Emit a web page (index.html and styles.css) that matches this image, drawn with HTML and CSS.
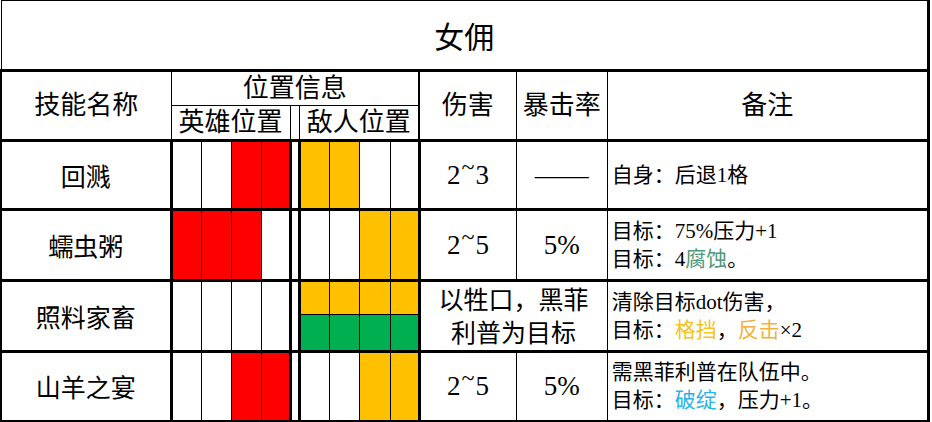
FILE: index.html
```html
<!DOCTYPE html>
<html lang="zh-CN">
<head>
<meta charset="utf-8">
<title>女佣</title>
<link rel="stylesheet" href="styles.css">
</head>
<body>
<table class="sheet">
  <colgroup>
    <col class="c-name">
    <col class="c-pos"><col class="c-pos"><col class="c-pos"><col class="c-pos4">
    <col class="c-gap">
    <col class="c-pos"><col class="c-pos"><col class="c-pos9"><col class="c-pos4">
    <col class="c-dmg">
    <col class="c-crit">
    <col class="c-note">
  </colgroup>
  <tr class="r-title">
    <td class="title" colspan="13">女佣</td>
  </tr>
  <tr class="r-h1">
    <td class="hd h-name" rowspan="2">技能名称</td>
    <td class="hd h-pos" colspan="9">位置信息</td>
    <td class="hd" rowspan="2">伤害</td>
    <td class="hd" rowspan="2">暴击率</td>
    <td class="hd h-note" rowspan="2">备注</td>
  </tr>
  <tr class="r-h2">
    <td class="hd sub" colspan="4">英雄位置</td>
    <td class="gap-h"></td>
    <td class="hd sub h-pos" colspan="4">敌人位置</td>
  </tr>
  <tr class="data r1">
    <td class="name">回溅</td>
    <td></td><td></td><td class="red"></td><td class="red end"></td>
    <td class="gap"></td>
    <td class="yel"></td><td class="yel"></td><td></td><td class="end"></td>
    <td class="num">2<span class="tilde">~</span>3</td>
    <td class="num dash">——</td>
    <td class="note">自身：后退1格</td>
  </tr>
  <tr class="data r2">
    <td class="name">蠕虫粥</td>
    <td class="red"></td><td class="red"></td><td class="red"></td><td class="end"></td>
    <td class="gap"></td>
    <td></td><td></td><td class="yel"></td><td class="yel end"></td>
    <td class="num">2<span class="tilde">~</span>5</td>
    <td class="num">5%</td>
    <td class="note">目标：75%压力+1<br>目标：4<span class="t-green">腐蚀</span>。</td>
  </tr>
  <tr class="data r3a">
    <td class="name" rowspan="2">照料家畜</td>
    <td rowspan="2"></td><td rowspan="2"></td><td rowspan="2"></td><td class="end" rowspan="2"></td>
    <td class="gap" rowspan="2"></td>
    <td class="yel upper"></td><td class="yel upper"></td><td class="yel upper"></td><td class="yel upper end"></td>
    <td class="target" colspan="2" rowspan="2">以牲口，黑菲<br>利普为目标</td>
    <td class="note" rowspan="2">清除目标dot伤害，<br>目标：<span class="t-gold">格挡</span>，<span class="t-orange">反击</span>×2</td>
  </tr>
  <tr class="data r3b">
    <td class="grn lower"></td><td class="grn lower"></td><td class="grn lower"></td><td class="grn lower end"></td>
  </tr>
  <tr class="data r4 last">
    <td class="name">山羊之宴</td>
    <td></td><td></td><td class="red"></td><td class="red end"></td>
    <td class="gap"></td>
    <td></td><td></td><td class="yel"></td><td class="yel end"></td>
    <td class="num">2<span class="tilde">~</span>5</td>
    <td class="num">5%</td>
    <td class="note">需黑菲利普在队伍中。<br>目标：<span class="t-cyan">破绽</span>，压力+1。</td>
  </tr>
</table>
</body>
</html>
```

FILE: styles.css
```css
html, body {
  margin: 0;
  padding: 0;
  background: #ffffff;
}

body {
  font-family: "Liberation Serif", "Noto Sans CJK SC", serif;
  font-weight: 400;
  color: #000000;
}

.sheet {
  border-collapse: collapse;
  table-layout: fixed;
  width: 930px;
}

.c-name { width: 170px; }
.c-pos { width: 30px; }
.c-pos9 { width: 31px; }
.c-pos4 { width: 29px; }
.c-gap { width: 9px; }
.c-dmg { width: 97px; }
.c-crit { width: 91px; }
.c-note { width: 321px; }

.sheet td {
  border: 1px solid #000000;
  padding: 0;
  text-align: center;
  vertical-align: middle;
  white-space: nowrap;
  overflow: hidden;
}

/* title row */
.r-title { height: 70px; }
.title {
  font-size: 30px;
  border-right-width: 3px !important;
  border-bottom-width: 3px !important;
}

/* header rows */
.r-h1 { height: 35px; }
.r-h2 { height: 35px; }
.hd {
  font-size: 26px;
  line-height: 30px;
}
.r-h1 td { border-top-width: 3px; }
.r-h1 td[rowspan], .r-h2 td { border-bottom-width: 3px; }
.h-name { border-left-width: 2px !important; }
.h-pos { border-right-width: 2px !important; }
.h-note { border-right-width: 3px !important; }
.sub { line-height: 30px; }

/* data rows */
.r1 { height: 69px; }
.r2 { height: 71px; }
.r3a { height: 34px; }
.r3b { height: 36px; }
.r4 { height: 69px; }

.data td {
  border-top-width: 3px;
  border-bottom-width: 3px;
}
.data td.upper { border-bottom-width: 1px; }
.data td.lower { border-top-width: 1px; }
.last td { border-bottom-width: 2px; }

.name {
  font-size: 25px;
  border-left-width: 2px !important;
  border-right-width: 3px !important;
}
.end { border-right-width: 3px !important; }
.gap {
  border-left-width: 3px !important;
  border-right-width: 3px !important;
}

.num {
  font-size: 27px;
}
.dash {
  font-size: 27px;
}
.tilde {
  display: inline-block;
  font-size: 24px;
  line-height: 1;
  position: relative;
  top: -9px;
  margin: 0 1px;
}

.target {
  font-size: 25px;
  line-height: 33px;
  padding-top: 2px !important;
  border-left-width: 3px !important;
}

.note {
  font-size: 21px;
  line-height: 28px;
  text-align: left !important;
  padding-left: 4px !important;
  border-right-width: 3px !important;
}

/* fills */
.red { background: #ff0000; }
.yel { background: #ffc000; }
.grn { background: #00b050; }

/* coloured words */
.t-green { color: #4f9a7c; }
.t-gold { color: #f5c320; }
.t-orange { color: #f2b23e; }
.t-cyan { color: #2ab3e6; }
```
